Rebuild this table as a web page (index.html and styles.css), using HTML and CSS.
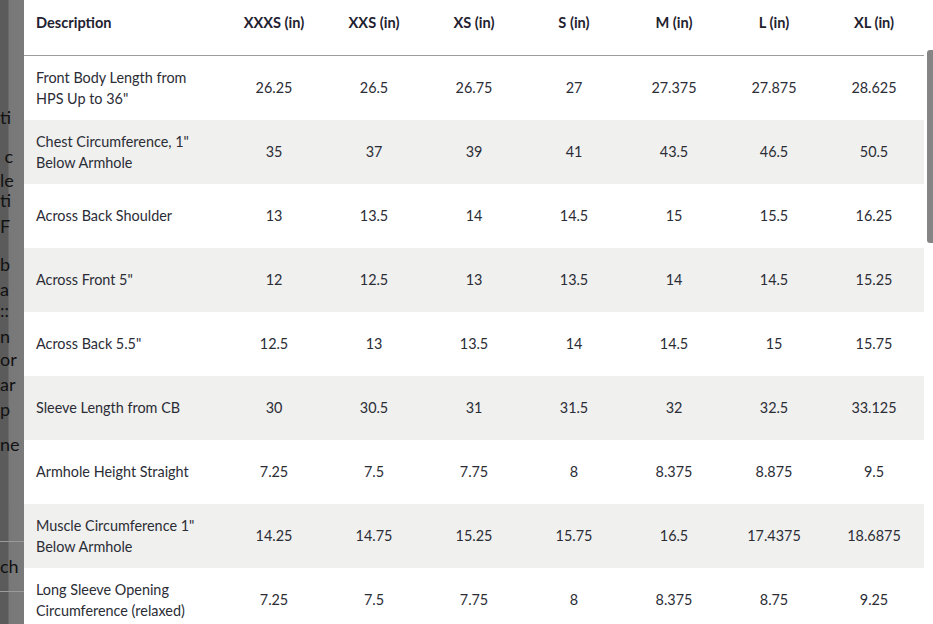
FILE: index.html
```html
<!DOCTYPE html>
<html lang="en">
<head>
<meta charset="utf-8">
<title>Size chart</title>
<link rel="stylesheet" href="styles.css">
</head>
<body>
<div class="screen">
  <aside class="backdrop">
    <div class="under">
      <span class="frag f1">ti</span>
      <span class="frag f2">&nbsp;c</span>
      <span class="frag f3">le</span>
      <span class="frag f4">ti</span>
      <span class="frag f5">F</span>
      <span class="frag f6">b</span>
      <span class="frag f7">a</span>
      <span class="frag f8">::</span>
      <span class="frag f9">n</span>
      <span class="frag f10">or</span>
      <span class="frag f11">ar</span>
      <span class="frag f12">p</span>
      <span class="frag f13">ne</span>
      <span class="rule r1"></span>
      <span class="frag f14">ch</span>
      <span class="rule r2"></span>
    </div>
  </aside>
  <main class="modal">
    <table class="size-table">
      <colgroup>
        <col class="col-desc">
        <col class="col-size"><col class="col-size"><col class="col-size"><col class="col-size">
        <col class="col-size"><col class="col-size"><col class="col-size">
      </colgroup>
      <thead>
        <tr>
          <th class="desc">Description</th>
          <th>XXXS (in)</th>
          <th>XXS (in)</th>
          <th>XS (in)</th>
          <th>S (in)</th>
          <th>M (in)</th>
          <th>L (in)</th>
          <th>XL (in)</th>
        </tr>
      </thead>
      <tbody>
        <tr>
          <td class="desc">Front Body Length from HPS Up to 36"</td>
          <td>26.25</td><td>26.5</td><td>26.75</td><td>27</td><td>27.375</td><td>27.875</td><td>28.625</td>
        </tr>
        <tr>
          <td class="desc">Chest Circumference, 1" Below Armhole</td>
          <td>35</td><td>37</td><td>39</td><td>41</td><td>43.5</td><td>46.5</td><td>50.5</td>
        </tr>
        <tr>
          <td class="desc">Across Back Shoulder</td>
          <td>13</td><td>13.5</td><td>14</td><td>14.5</td><td>15</td><td>15.5</td><td>16.25</td>
        </tr>
        <tr>
          <td class="desc">Across Front 5"</td>
          <td>12</td><td>12.5</td><td>13</td><td>13.5</td><td>14</td><td>14.5</td><td>15.25</td>
        </tr>
        <tr>
          <td class="desc">Across Back 5.5"</td>
          <td>12.5</td><td>13</td><td>13.5</td><td>14</td><td>14.5</td><td>15</td><td>15.75</td>
        </tr>
        <tr>
          <td class="desc">Sleeve Length from CB</td>
          <td>30</td><td>30.5</td><td>31</td><td>31.5</td><td>32</td><td>32.5</td><td>33.125</td>
        </tr>
        <tr>
          <td class="desc">Armhole Height Straight</td>
          <td>7.25</td><td>7.5</td><td>7.75</td><td>8</td><td>8.375</td><td>8.875</td><td>9.5</td>
        </tr>
        <tr>
          <td class="desc">Muscle Circumference 1" Below Armhole</td>
          <td>14.25</td><td>14.75</td><td>15.25</td><td>15.75</td><td>16.5</td><td>17.4375</td><td>18.6875</td>
        </tr>
        <tr>
          <td class="desc">Long Sleeve Opening Circumference (relaxed)</td>
          <td>7.25</td><td>7.5</td><td>7.75</td><td>8</td><td>8.375</td><td>8.75</td><td>9.25</td>
        </tr>
      </tbody>
    </table>
    <div class="scrollbar"><div class="thumb"></div></div>
  </main>
</div>
</body>
</html>
```

FILE: styles.css
```css
* { box-sizing: border-box; }
html, body {
  margin: 0;
  padding: 0;
  height: 624px;
  overflow: hidden;
  background: #ffffff;
}
body {
  font-family: Lato, "Noto Sans", sans-serif;
  color: #2e2e33;
}
.screen {
  display: flex;
  width: 933px;
  height: 624px;
}
.backdrop {
  width: 24px;
  flex: 0 0 24px;
  height: 624px;
  overflow: hidden;
  background: linear-gradient(to right, #5b5b5b 0, #5b5b5b 8px, #787878 9px, #7a7a7a 24px);
}
.under {
  position: relative;
  height: 624px;
  font-size: 18px;
  color: #121212;
}
.frag {
  position: absolute;
  left: 0;
  white-space: nowrap;
  line-height: 20px;
}
.f1 { top: 107px; }
.f2 { top: 146px; }
.f3 { top: 170px; }
.f4 { top: 190px; }
.f5 { top: 216px; }
.f6 { top: 254px; }
.f7 { top: 279px; }
.f8 { top: 300px; }
.f9 { top: 326px; }
.f10 { top: 349px; }
.f11 { top: 374px; }
.f12 { top: 399px; }
.f13 { top: 434px; }
.f14 { top: 556px; }
.rule {
  position: absolute;
  left: 0;
  width: 24px;
  height: 1px;
  background: #9a9a9a;
}
.r1 { top: 541px; }
.r2 { top: 591px; }

.modal {
  flex: 1;
  display: flex;
  background: #ffffff;
  height: 624px;
  overflow: hidden;
}
.size-table {
  width: 900px;
  flex: 0 0 900px;
  border-collapse: collapse;
  table-layout: fixed;
  font-size: 14.4px;
}
.col-desc { width: 200px; }
.col-size { width: 100px; }
.size-table th {
  font-weight: 700;
  font-size: 14.6px;
  color: #1f2230;
  line-height: 18px;
  padding: 14px 6px 23px;
  text-align: center;
  border-bottom: 1px solid #9c9c9c;
  white-space: nowrap;
}
.size-table th.desc {
  text-align: left;
  padding-left: 12px;
}
.size-table td {
  height: 64px;
  padding: 0 6px;
  line-height: 21px;
  text-align: center;
  vertical-align: middle;
  color: #2b2d36;
}
.size-table td.desc {
  text-align: left;
  padding: 0 22px 0 12px;
}
.size-table tbody tr:nth-child(even) td {
  background: #f0f0ee;
}
.scrollbar {
  flex: 1;
  position: relative;
  background: #ffffff;
}
.thumb {
  position: absolute;
  right: 0;
  top: 50px;
  width: 6px;
  height: 193px;
  border-radius: 3px 0 0 3px;
  background: #858585;
}
```
